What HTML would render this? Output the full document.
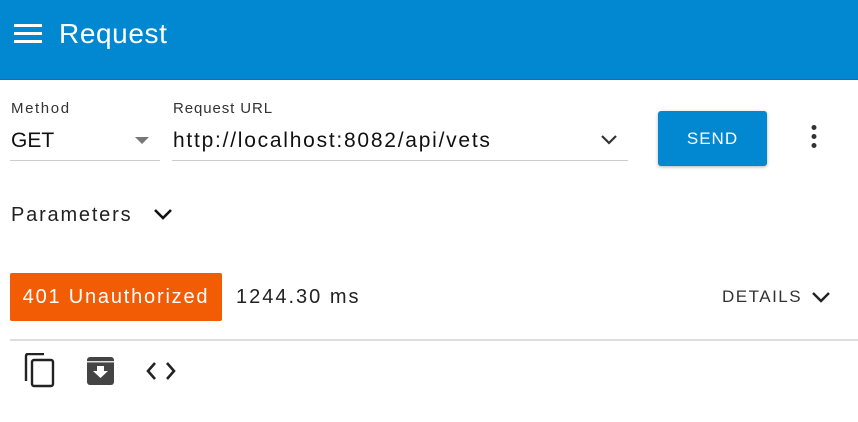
<!DOCTYPE html>
<html><head><style>
*{margin:0;padding:0;box-sizing:border-box}
body{width:858px;height:422px;background:#fff;font-family:"Liberation Sans",sans-serif;position:relative;overflow:hidden;color:#222}
.a{position:absolute;white-space:nowrap}
</style></head><body>
<div class="a" style="left:0;top:0;width:858px;height:80px;background:#0288d1;border-bottom:1px solid #0277c0"></div>
<svg class="a" style="left:14px;top:23px" width="30" height="22"><rect x="0" y="1" width="28" height="3" fill="#fff"/><rect x="0" y="9" width="28" height="3" fill="#fff"/><rect x="0" y="17" width="28" height="3" fill="#fff"/></svg>
<div class="a" style="left:59px;top:18px;font-size:28px;color:#fff;letter-spacing:0.6px">Request</div>

<div class="a" style="left:11px;top:100px;font-size:15px;color:#333;letter-spacing:1.6px">Method</div>
<div class="a" style="left:11px;top:129px;font-size:21px;color:#111">GET</div>
<svg class="a" style="left:135px;top:137px" width="16" height="8"><path d="M0 0L14 0L7 7Z" fill="#777"/></svg>
<div class="a" style="left:10px;top:160px;width:150px;height:1px;background:#ccc"></div>

<div class="a" style="left:173px;top:100px;font-size:15px;color:#333;letter-spacing:0.9px">Request URL</div>
<div class="a" style="left:173px;top:129px;font-size:21px;color:#111;letter-spacing:1.75px">http://localhost:8082/api/vets</div>
<svg class="a" style="left:600px;top:133px" width="20" height="14"><path d="M2 3L9 10L16 3" stroke="#333" stroke-width="2.2" fill="none"/></svg>
<div class="a" style="left:172px;top:160px;width:456px;height:1px;background:#ccc"></div>

<div class="a" style="left:658px;top:111px;width:109px;height:55px;background:#0288d1;border-radius:3px;box-shadow:0 1px 3px rgba(0,0,0,.3);color:#fff;font-size:17px;text-align:center;line-height:55px;letter-spacing:1px">SEND</div>
<svg class="a" style="left:809px;top:124px" width="10" height="26"><circle cx="5" cy="3.5" r="2.5" fill="#333"/><circle cx="5" cy="12.5" r="2.5" fill="#333"/><circle cx="5" cy="21.5" r="2.5" fill="#333"/></svg>

<div class="a" style="left:11px;top:204px;font-size:20px;color:#222;letter-spacing:1.8px">Parameters</div>
<svg class="a" style="left:153px;top:208px" width="22" height="14"><path d="M2 2L10 10L18 2" stroke="#111" stroke-width="2.6" fill="none"/></svg>

<div class="a" style="left:10px;top:273px;width:212px;height:48px;background:#f25c05;border-radius:2px;color:#fff;font-size:20px;line-height:48px;text-align:center;letter-spacing:1.8px">401 Unauthorized</div>
<div class="a" style="left:236px;top:286px;font-size:20px;color:#222;letter-spacing:2px">1244.30 ms</div>
<div class="a" style="left:722px;top:287px;font-size:17px;color:#333;letter-spacing:1.5px">DETAILS</div>
<svg class="a" style="left:811px;top:291px" width="20" height="14"><path d="M2 2L10 10L18 2" stroke="#222" stroke-width="2.4" fill="none"/></svg>

<div class="a" style="left:10px;top:339px;width:848px;height:2px;background:#ddd"></div>

<svg class="a" style="left:24px;top:353px" width="32" height="36"><path d="M2 28V3Q2 1 4 1H20" stroke="#222" stroke-width="2.4" fill="none"/><rect x="8" y="7" width="21" height="26" rx="2" stroke="#222" stroke-width="2.4" fill="none"/></svg>
<svg class="a" style="left:86px;top:356px" width="30" height="30"><rect x="1" y="1" width="27" height="28" rx="3" fill="#444"/><rect x="1" y="5" width="27" height="1.5" fill="#ddd"/><path d="M11 10H18V15H22L14.5 22L7 15H11Z" fill="#fff"/></svg>
<svg class="a" style="left:145px;top:360px" width="32" height="22"><path d="M10 3L3 11L10 19M22 3L29 11L22 19" stroke="#222" stroke-width="2.6" fill="none"/></svg>
</body></html>
